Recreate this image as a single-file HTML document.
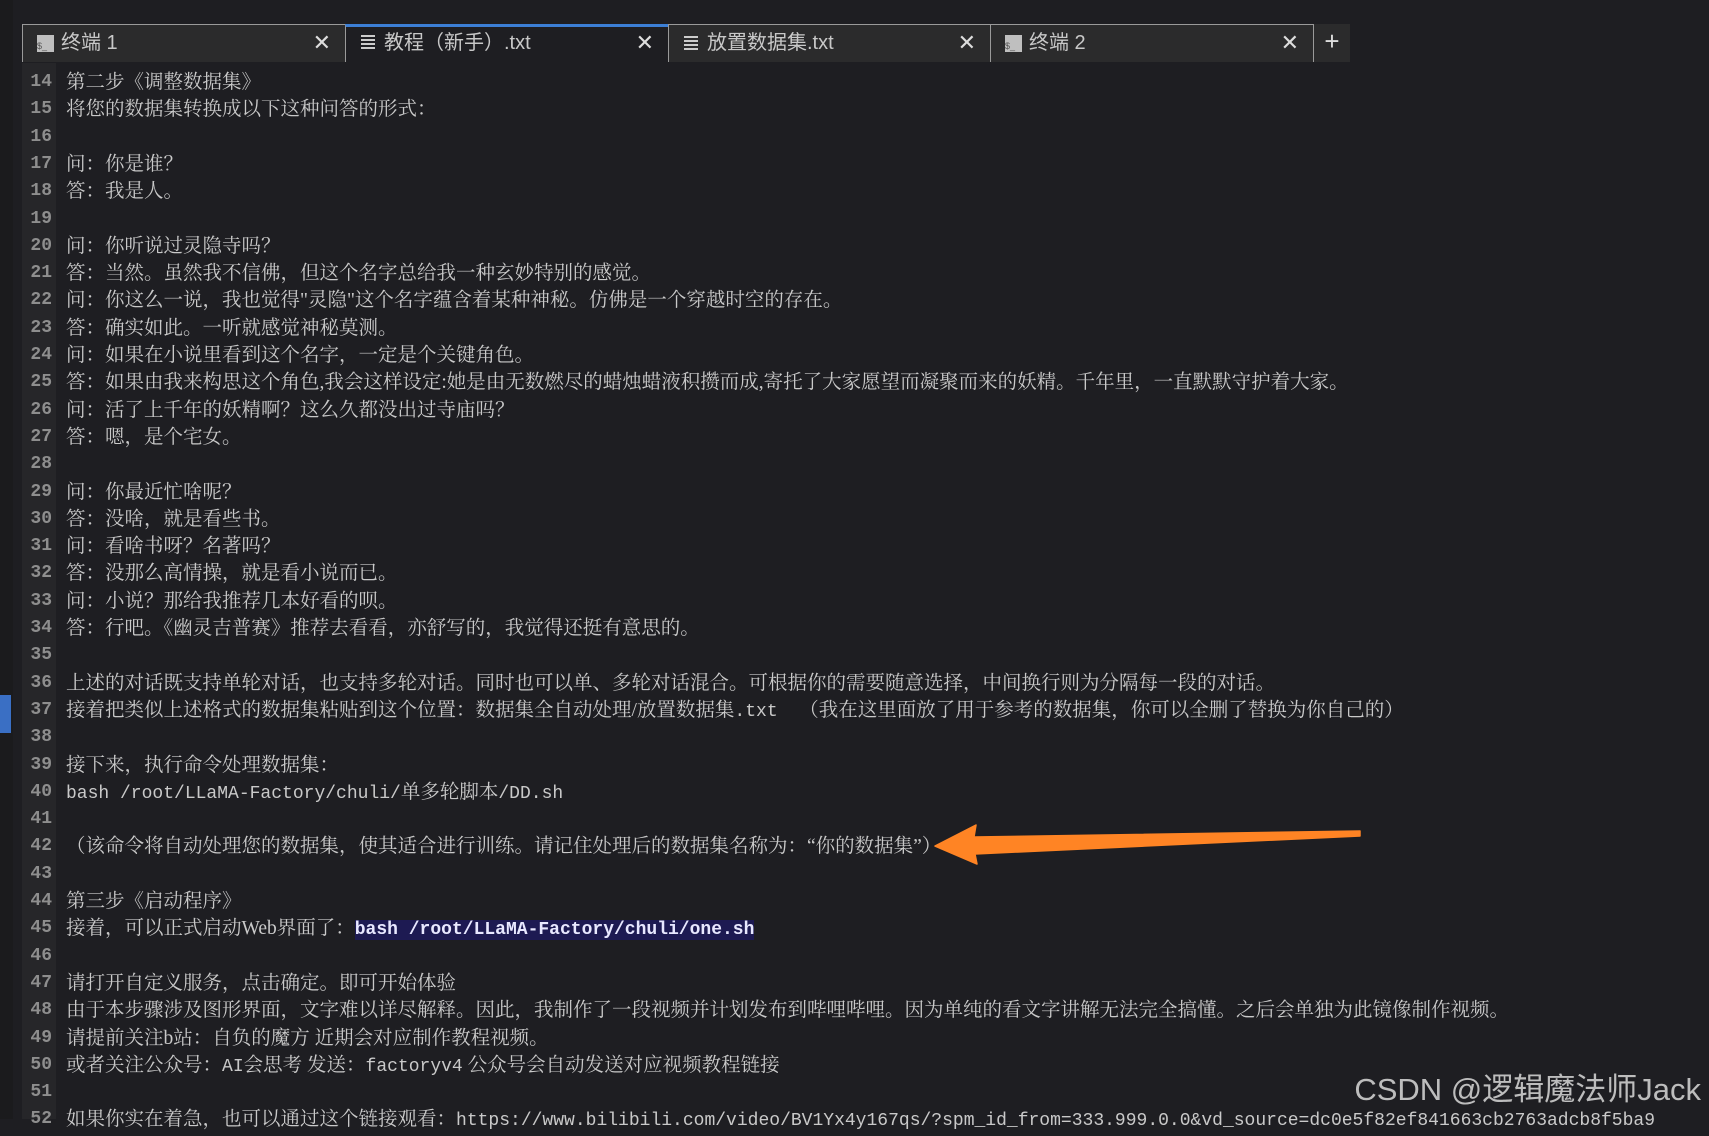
<!DOCTYPE html>
<html><head><meta charset="utf-8"><style>
html,body{margin:0;padding:0}
body{width:1709px;height:1119px;background:#1e1e22;position:relative;overflow:hidden;font-family:"Liberation Serif","Noto Serif CJK SC",serif;}
.lstrip{position:absolute;left:0;top:0;width:13px;height:1119px;background:#1b1b1d}
.gut{position:absolute;left:22px;top:63px;width:34px;height:1056px;background:#262629}
.mark{position:absolute;left:0;top:695px;width:11px;height:38px;background:#3a6fc4}
.tab{position:absolute;top:24px;height:38px;background:#2b2b2c;border:1px solid #9a9a9a;border-bottom:none;box-sizing:border-box;color:#c8c8c8;font-family:"Liberation Sans","Noto Sans CJK SC",sans-serif;font-size:20px;line-height:36px}
.tab.act{background:#1e1e22;border-top:3px solid #3c7fd6;line-height:32px}
.tab .lb{position:absolute;left:38px}
.tab .x{position:absolute;right:14px;top:0;font-size:22px;color:#ddd}
.ic{position:absolute;left:14px;top:10px;width:17px;height:17px;background:#bfbfbf;color:#555;font-size:9px;line-height:22px;text-align:left}
.ln{position:absolute;left:15px;top:11px;width:14px;height:15px}
.ln i{display:block;height:2px;background:#ccc;margin-bottom:2px}
.plus{position:absolute;left:1314px;top:24px;width:36px;height:38px;background:#2b2b2c;color:#ddd;font-size:26px;line-height:34px;text-align:center;font-family:"Liberation Sans",sans-serif}
.row{position:absolute;left:0;height:27.3px;line-height:27.3px;white-space:pre;font-size:19.5px;color:#c9c9c9}
.row .n{position:absolute;left:22px;width:30px;text-align:right;color:#8e8e8e;font-family:"Liberation Mono",monospace;font-weight:bold;font-size:18px}
.row .t{position:absolute;left:66px}
.m{font-family:"Liberation Mono",monospace;font-size:18px}
.hl{background:#1d1a52;color:#e8e8ff;font-family:"Liberation Mono",monospace;font-weight:bold;font-size:18px}
.wm{position:absolute;right:8px;top:1064px;font-family:"Liberation Sans","Noto Sans CJK SC",sans-serif;font-size:31px;color:#bdbdbd}
</style></head><body>
<div class="lstrip"></div>
<div class="gut"></div>
<div class="mark"></div>
<div class="tab" style="left:22px;width:324px"><div class="ic">$_</div><span class="lb">终端 1</span><span class="x">✕</span></div>
<div class="tab act" style="left:345px;width:324px"><div class="ln" style="top:8px"><i></i><i></i><i></i><i></i></div><span class="lb">教程（新手）.txt</span><span class="x">✕</span></div>
<div class="tab" style="left:668px;width:323px"><div class="ln"><i></i><i></i><i></i><i></i></div><span class="lb">放置数据集.txt</span><span class="x">✕</span></div>
<div class="tab" style="left:990px;width:324px"><div class="ic">$_</div><span class="lb">终端 2</span><span class="x">✕</span></div>
<div class="plus">+</div>

<div class="row" style="top:69px"><span class="n">14</span><span class="t">第二步《调整数据集》</span></div>
<div class="row" style="top:96.3px"><span class="n">15</span><span class="t">将您的数据集转换成以下这种问答的形式：</span></div>
<div class="row" style="top:123.6px"><span class="n">16</span><span class="t"></span></div>
<div class="row" style="top:150.9px"><span class="n">17</span><span class="t">问：你是谁？</span></div>
<div class="row" style="top:178.2px"><span class="n">18</span><span class="t">答：我是人。</span></div>
<div class="row" style="top:205.5px"><span class="n">19</span><span class="t"></span></div>
<div class="row" style="top:232.8px"><span class="n">20</span><span class="t">问：你听说过灵隐寺吗？</span></div>
<div class="row" style="top:260.1px"><span class="n">21</span><span class="t">答：当然。虽然我不信佛，但这个名字总给我一种玄妙特别的感觉。</span></div>
<div class="row" style="top:287.4px"><span class="n">22</span><span class="t">问：你这么一说，我也觉得"灵隐"这个名字蕴含着某种神秘。仿佛是一个穿越时空的存在。</span></div>
<div class="row" style="top:314.7px"><span class="n">23</span><span class="t">答：确实如此。一听就感觉神秘莫测。</span></div>
<div class="row" style="top:342px"><span class="n">24</span><span class="t">问：如果在小说里看到这个名字，一定是个关键角色。</span></div>
<div class="row" style="top:369.3px"><span class="n">25</span><span class="t">答：如果由我来构思这个角色,我会这样设定:她是由无数燃尽的蜡烛蜡液积攒而成,寄托了大家愿望而凝聚而来的妖精。千年里，一直默默守护着大家。</span></div>
<div class="row" style="top:396.6px"><span class="n">26</span><span class="t">问：活了上千年的妖精啊？这么久都没出过寺庙吗？</span></div>
<div class="row" style="top:423.9px"><span class="n">27</span><span class="t">答：嗯，是个宅女。</span></div>
<div class="row" style="top:451.2px"><span class="n">28</span><span class="t"></span></div>
<div class="row" style="top:478.5px"><span class="n">29</span><span class="t">问：你最近忙啥呢？</span></div>
<div class="row" style="top:505.8px"><span class="n">30</span><span class="t">答：没啥，就是看些书。</span></div>
<div class="row" style="top:533.1px"><span class="n">31</span><span class="t">问：看啥书呀？名著吗？</span></div>
<div class="row" style="top:560.4px"><span class="n">32</span><span class="t">答：没那么高情操，就是看小说而已。</span></div>
<div class="row" style="top:587.7px"><span class="n">33</span><span class="t">问：小说？那给我推荐几本好看的呗。</span></div>
<div class="row" style="top:615px"><span class="n">34</span><span class="t">答：行吧。《幽灵吉普赛》推荐去看看，亦舒写的，我觉得还挺有意思的。</span></div>
<div class="row" style="top:642.3px"><span class="n">35</span><span class="t"></span></div>
<div class="row" style="top:669.6px"><span class="n">36</span><span class="t">上述的对话既支持单轮对话，也支持多轮对话。同时也可以单、多轮对话混合。可根据你的需要随意选择，中间换行则为分隔每一段的对话。</span></div>
<div class="row" style="top:696.9px"><span class="n">37</span><span class="t">接着把类似上述格式的数据集粘贴到这个位置：数据集全自动处理/放置数据集<span class="m">.txt  </span>（我在这里面放了用于参考的数据集，你可以全删了替换为你自己的）</span></div>
<div class="row" style="top:724.2px"><span class="n">38</span><span class="t"></span></div>
<div class="row" style="top:751.5px"><span class="n">39</span><span class="t">接下来，执行命令处理数据集：</span></div>
<div class="row" style="top:778.8px"><span class="n">40</span><span class="t"><span class="m">bash /root/LLaMA-Factory/chuli/</span>单多轮脚本<span class="m">/DD.sh</span></span></div>
<div class="row" style="top:806.1px"><span class="n">41</span><span class="t"></span></div>
<div class="row" style="top:833.4px"><span class="n">42</span><span class="t">（该命令将自动处理您的数据集，使其适合进行训练。请记住处理后的数据集名称为：“你的数据集”）</span></div>
<div class="row" style="top:860.7px"><span class="n">43</span><span class="t"></span></div>
<div class="row" style="top:888px"><span class="n">44</span><span class="t">第三步《启动程序》</span></div>
<div class="row" style="top:915.3px"><span class="n">45</span><span class="t">接着，可以正式启动Web界面了：<span class="hl">bash /root/LLaMA-Factory/chuli/one.sh</span></span></div>
<div class="row" style="top:942.6px"><span class="n">46</span><span class="t"></span></div>
<div class="row" style="top:969.9px"><span class="n">47</span><span class="t">请打开自定义服务，点击确定。即可开始体验</span></div>
<div class="row" style="top:997.2px"><span class="n">48</span><span class="t">由于本步骤涉及图形界面，文字难以详尽解释。因此，我制作了一段视频并计划发布到哔哩哔哩。因为单纯的看文字讲解无法完全搞懂。之后会单独为此镜像制作视频。</span></div>
<div class="row" style="top:1024.5px"><span class="n">49</span><span class="t">请提前关注b站：自负的魔方 近期会对应制作教程视频。</span></div>
<div class="row" style="top:1051.8px"><span class="n">50</span><span class="t">或者关注公众号：<span class="m">AI</span>会思考 发送：<span class="m">factoryv4</span> 公众号会自动发送对应视频教程链接</span></div>
<div class="row" style="top:1079.1px"><span class="n">51</span><span class="t"></span></div>
<div class="row" style="top:1106.4px"><span class="n">52</span><span class="t">如果你实在着急，也可以通过这个链接观看：<span class="m">https://www.bilibili.com/video/BV1Yx4y167qs/?spm_id_from=333.999.0.0&amp;vd_source=dc0e5f82ef841663cb2763adcb8f5ba9</span></span></div>

<svg style="position:absolute;left:0;top:0" width="1709" height="1119">
<path d="M935 846 L976 825 L974 837 L1360 831 L1360 836 L975 854 L977 864 Z" fill="#ff8424" stroke="#ff8424" stroke-width="1.5" stroke-linejoin="round"/>
</svg>
<div class="wm">CSDN @逻辑魔法师Jack</div>
</body></html>
